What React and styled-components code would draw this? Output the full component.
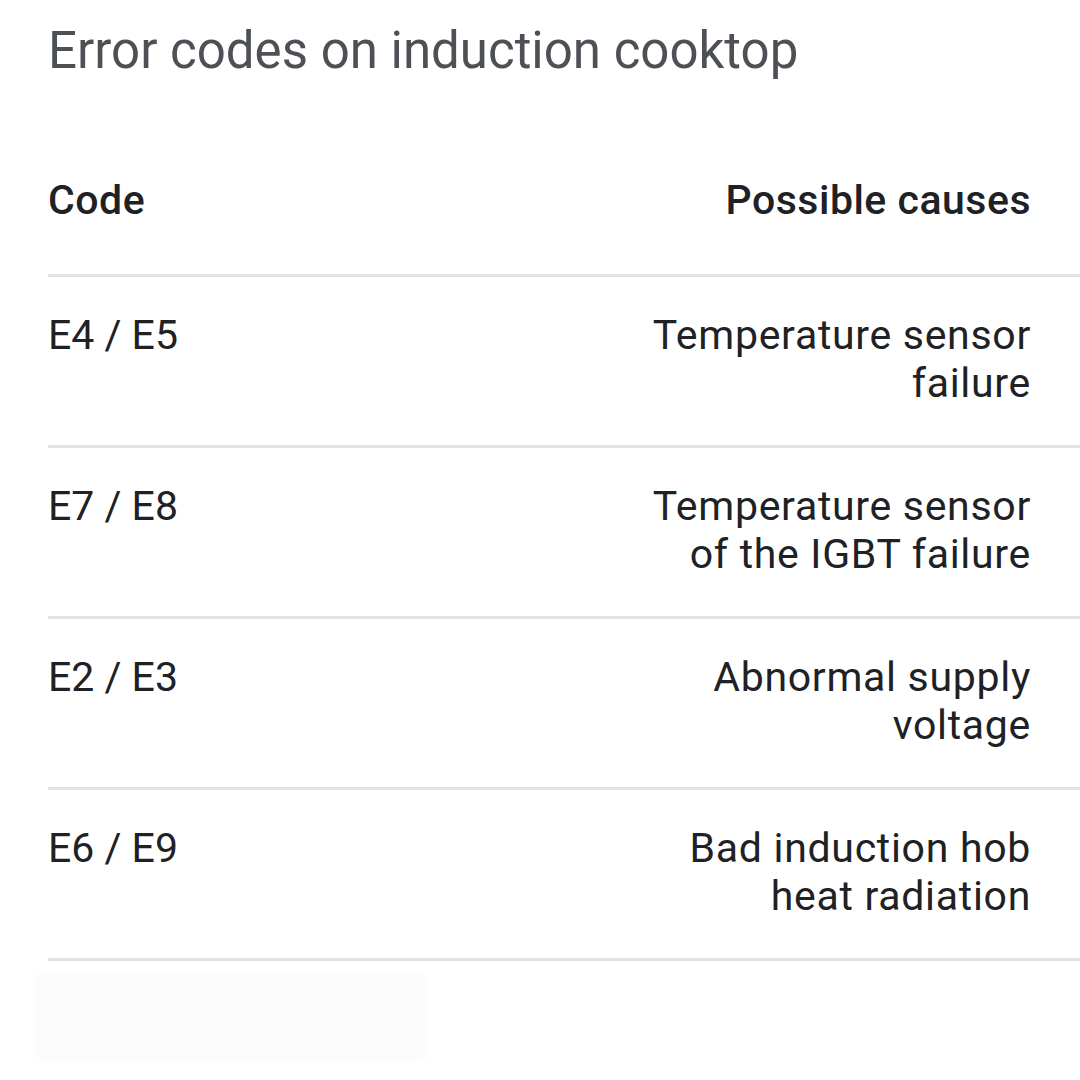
import React from "react";
import styled, { createGlobalStyle } from "styled-components";

const Global = createGlobalStyle`
  html, body { margin: 0; padding: 0; background: #ffffff; }
  body { font-family: Roboto, "Noto Sans", sans-serif; }
`;

const Page = styled.div`
  width: 1080px;
  height: 1080px;
  box-sizing: border-box;
  padding: 21px 0 0 48px;
  overflow: hidden;
  position: relative;
`;

const Title = styled.h1`
  margin: 0;
  font-size: 51px;
  line-height: 60px;
  font-weight: 400;
  color: #4d5156;
`;

const Table = styled.div`
  display: grid;
  grid-template-columns: 1fr auto;
  margin-top: 95px;
`;

const HeadCell = styled.div`
  font-size: 41px;
  line-height: 48px;
  font-weight: 500;
  letter-spacing: 0.5px;
  color: #202124;
  padding: 0 ${(p) => (p.$right ? "49px" : "0")} 50px 0;
  text-align: ${(p) => (p.$right ? "right" : "left")};
  border-bottom: 3px solid #e3e3e3;
`;

const Cell = styled.div`
  font-size: 41px;
  line-height: 48px;
  font-weight: 400;
  letter-spacing: ${(p) => (p.$right ? "0.7px" : "0")};
  color: #202124;
  padding: 34px ${(p) => (p.$right ? "49px" : "0")} 38px 0;
  text-align: ${(p) => (p.$right ? "right" : "left")};
  border-bottom: 3px solid #e3e3e3;
`;

const Line = styled.span`
  display: block;
`;

const Smudge = styled.div`
  position: absolute;
  left: 34px;
  top: 972px;
  width: 392px;
  height: 90px;
  background: #fcfcfc;
  border-radius: 8px;
  filter: blur(2px);
`;

const rows = [
  { code: "E4 / E5", cause: ["Temperature sensor", "failure"] },
  { code: "E7 / E8", cause: ["Temperature sensor", "of the IGBT failure"] },
  { code: "E2 / E3", cause: ["Abnormal supply", "voltage"] },
  { code: "E6 / E9", cause: ["Bad induction hob", "heat radiation"] },
];

export default function App() {
  return (
    <Page>
      <Global />
      <Title>Error codes on induction cooktop</Title>
      <Table>
        <HeadCell>Code</HeadCell>
        <HeadCell $right>Possible causes</HeadCell>
        {rows.map((r) => (
          <React.Fragment key={r.code}>
            <Cell>{r.code}</Cell>
            <Cell $right>
              {r.cause.map((l) => (
                <Line key={l}>{l}</Line>
              ))}
            </Cell>
          </React.Fragment>
        ))}
      </Table>
      <Smudge />
    </Page>
  );
}
